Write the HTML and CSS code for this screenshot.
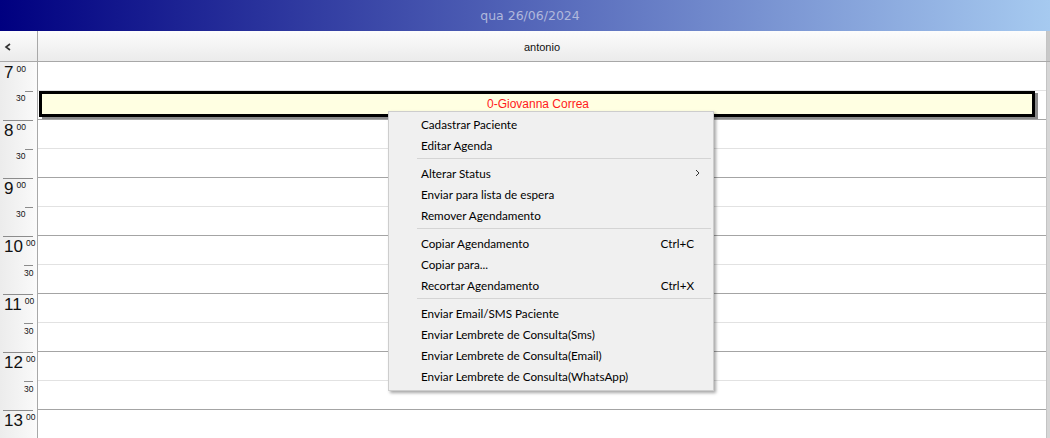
FILE: index.html
```html
<!DOCTYPE html>
<html>
<head>
<meta charset="utf-8">
<link rel="stylesheet" href="styles.css">
</head>
<body>
<div class="app">
  <div class="titlebar">qua 26/06/2024</div>
  <div class="header">
    <div class="nav"><svg width="8" height="8" viewBox="0 0 8 8"><polyline points="6,1 2,4 6,7" fill="none" stroke="#333" stroke-width="1.6"/></svg></div>
    <div class="colhead">antonio</div>
    <div class="edge dark"></div>
  </div>
  <div class="body">
    <div class="times">
      <div class="tslot hour first"><span class="h">7</span><span class="m">00</span></div>
      <div class="tslot half"><span class="m">30</span></div>
      <div class="tslot hour"><span class="h">8</span><span class="m">00</span></div>
      <div class="tslot half"><span class="m">30</span></div>
      <div class="tslot hour"><span class="h">9</span><span class="m">00</span></div>
      <div class="tslot half"><span class="m">30</span></div>
      <div class="tslot hour"><span class="h">10</span><span class="m">00</span></div>
      <div class="tslot half wide"><span class="m">30</span></div>
      <div class="tslot hour"><span class="h">11</span><span class="m">00</span></div>
      <div class="tslot half wide"><span class="m">30</span></div>
      <div class="tslot hour"><span class="h">12</span><span class="m">00</span></div>
      <div class="tslot half wide"><span class="m">30</span></div>
      <div class="tslot hour"><span class="h">13</span><span class="m">00</span></div>
    </div>
    <div class="grid">
      <div class="gslot top"></div>
      <div class="gslot bottom"></div>
      <div class="gslot top"></div>
      <div class="gslot bottom"></div>
      <div class="gslot top"></div>
      <div class="gslot bottom"></div>
      <div class="gslot top"></div>
      <div class="gslot bottom"></div>
      <div class="gslot top"></div>
      <div class="gslot bottom"></div>
      <div class="gslot top"></div>
      <div class="gslot bottom"></div>
      <div class="gslot top"></div>
      <div class="appt">0-Giovanna Correa</div>
    </div>
    <div class="edge"></div>
  </div>
  <div class="menu">
    <div class="item"><span>Cadastrar Paciente</span></div>
    <div class="item"><span>Editar Agenda</span></div>
    <div class="sep"></div>
    <div class="item"><span>Alterar Status</span><svg class="arrow" width="5" height="8" viewBox="0 0 5 8"><polyline points="1,1 4,4 1,7" fill="none" stroke="#333" stroke-width="1"/></svg></div>
    <div class="item"><span>Enviar para lista de espera</span></div>
    <div class="item"><span>Remover Agendamento</span></div>
    <div class="sep"></div>
    <div class="item"><span>Copiar Agendamento</span><span class="key">Ctrl+C</span></div>
    <div class="item"><span>Copiar para...</span></div>
    <div class="item"><span>Recortar Agendamento</span><span class="key">Ctrl+X</span></div>
    <div class="sep"></div>
    <div class="item"><span>Enviar Email/SMS Paciente</span></div>
    <div class="item"><span>Enviar Lembrete de Consulta(Sms)</span></div>
    <div class="item"><span>Enviar Lembrete de Consulta(Email)</span></div>
    <div class="item"><span>Enviar Lembrete de Consulta(WhatsApp)</span></div>
  </div>
</div>
</body>
</html>
```

FILE: styles.css
```css
html, body {
  margin: 0;
  padding: 0;
  background: #ffffff;
  overflow: hidden;
}
.app {
  position: relative;
  width: 1050px;
  height: 438px;
  overflow: hidden;
  font-family: "Liberation Sans", Arial, sans-serif;
}
.titlebar {
  height: 31px;
  line-height: 31px;
  text-align: center;
  background: linear-gradient(to right, #000080 0%, #a6caf0 100%);
  color: #b0b8dc;
  font-family: "DejaVu Sans", sans-serif;
  font-size: 12.5px;
  padding-left: 10px;
  box-sizing: border-box;
}
.header {
  display: flex;
  height: 30px;
  border-bottom: 1px solid #a8a8a8;
  background: linear-gradient(#fcfcfc, #ebebeb);
}
.nav {
  width: 33px;
  border-right: 1px solid #a8a8a8;
  display: flex;
  align-items: center;
  padding-left: 4px;
  padding-top: 1px;
}
.colhead {
  flex: 1;
  display: flex;
  align-items: center;
  justify-content: center;
  font-size: 11px;
  color: #111;
  padding-top: 1px;
}
.edge {
  width: 3px;
  background: #d6d6d6;
  border-left: 1px solid #c4c4c4;
}
.edge.dark {
  background: #c8c8c8;
}
.body {
  display: flex;
  height: 376px;
  overflow: hidden;
}
.times {
  width: 37px;
  border-right: 1px solid #a8a8a8;
  background: linear-gradient(to right, #ececec, #f7f7f7 80%, #fbfbfb);
  flex-shrink: 0;
}
.tslot {
  position: relative;
  height: 29px;
  box-sizing: border-box;
  display: flex;
  align-items: flex-start;
  color: #111;
}
.tslot.hour::before {
  content: "";
  position: absolute;
  left: 3px;
  right: 4px;
  top: 0;
  height: 1px;
  background: #8c8c8c;
}
.tslot.hour.first::before {
  display: none;
}
.tslot .h {
  font-size: 17px;
  line-height: 17px;
  margin-left: 4px;
  margin-top: 2px;
}
.tslot.hour .m {
  font-size: 8.5px;
  line-height: 8px;
  margin-left: 3px;
  margin-top: 3px;
}
.tslot.half::before {
  content: "";
  position: absolute;
  left: 25px;
  width: 8px;
  top: 0;
  height: 1px;
  background: #8c8c8c;
}
.tslot.half .m {
  font-size: 8.5px;
  line-height: 8px;
  margin-left: 16px;
  margin-top: 3px;
}
.tslot.half.wide::before {
  left: 24px;
  width: 9px;
}
.tslot.half.wide .m {
  margin-left: 24px;
  margin-top: 4px;
}
.grid {
  position: relative;
  flex: 1;
  background: #ffffff;
}
.gslot {
  height: 28px;
  border-bottom: 1px solid #e2e2e2;
}
.gslot.bottom {
  border-bottom-color: #a4a4a4;
}
.appt {
  position: absolute;
  left: 1px;
  top: 29px;
  width: 996px;
  height: 26px;
  box-sizing: border-box;
  border: 3px solid #000;
  background: #ffffe2;
  box-shadow: 3px 2px 0 #8a8a8a;
  color: #ff1a1a;
  font-size: 12px;
  line-height: 20px;
  text-align: center;
  padding-left: 2px;
}
.menu {
  position: absolute;
  left: 388px;
  top: 111px;
  width: 326px;
  box-sizing: border-box;
  padding: 1px 2px 4px 2px;
  background: #f0f0f0;
  border: 1px solid #cdcdcd;
  box-shadow: 2px 2px 3px rgba(0, 0, 0, 0.35);
  font-family: Lato, "Open Sans", sans-serif;
  font-size: 11.7px;
  color: #000;
}
.item {
  height: 21px;
  display: flex;
  align-items: center;
  justify-content: space-between;
  padding-left: 30px;
  padding-right: 17px;
}
.item .arrow {
  margin-right: -6px;
}
.sep {
  height: 7px;
  display: flex;
  align-items: center;
  margin-left: 26px;
}
.sep::before {
  content: "";
  flex: 1;
  height: 1px;
  background: #d4d4d4;
}
```
